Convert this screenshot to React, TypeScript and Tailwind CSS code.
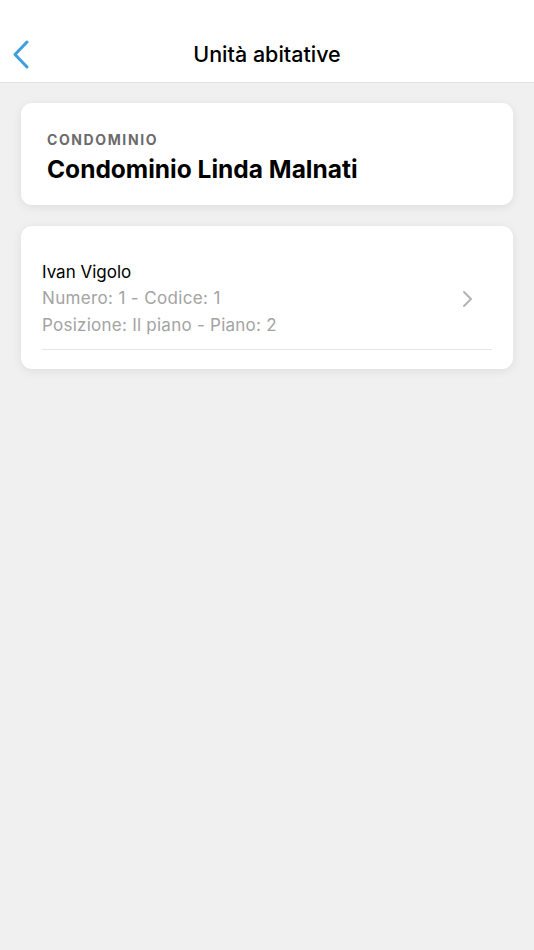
import React from "react";

export default function App() {
  return (
    <div className="min-h-[950px] w-[534px] bg-[#f0f0f0]" style={{ fontFamily: "Inter, 'Noto Sans', sans-serif" }}>
      <div className="h-[83px] bg-white border-b border-[#e2e2e2] pt-[27px]">
        <div className="relative h-[55px] flex items-center justify-center">
          <svg className="absolute left-[11px] top-[13px]" width="20" height="30" viewBox="0 0 20 30" fill="none">
            <path d="M16 2 L4 14.5 L16 27" stroke="#3d9fe0" strokeWidth="3" strokeLinecap="round" strokeLinejoin="round" />
          </svg>
          <div className="text-[21.5px] font-medium text-black tracking-[0px]">Unità abitative</div>
        </div>
      </div>
      <div className="px-[21px] pt-[20px] flex flex-col gap-[21px]">
        <div className="bg-white rounded-[11px] shadow-[0_2px_10px_rgba(0,0,0,0.08)] h-[102px] px-[26px] pt-[27px]">
          <div className="text-[14px] font-bold tracking-[1.6px] text-[#6b6b6b] leading-[20px]">CONDOMINIO</div>
          <div className="text-[24.5px] font-bold text-black leading-[32px] mt-[3px] tracking-[0px]">Condominio Linda Malnati</div>
        </div>
        <div className="bg-white rounded-[11px] shadow-[0_2px_10px_rgba(0,0,0,0.08)] h-[143px] px-[21px] pt-[33px]">
          <div className="flex items-center border-b border-[#e6e6e6] pb-[11px]">
            <div className="flex-1">
              <div className="text-[17px] text-black leading-[26px]">Ivan Vigolo</div>
              <div className="text-[17px] text-[#a3a3a3] leading-[27px] tracking-[0.35px]">Numero: 1 - Codice: 1</div>
              <div className="text-[17px] text-[#a3a3a3] leading-[26px] tracking-[0.25px]">Posizione: Il piano - Piano: 2</div>
            </div>
            <svg className="mr-[19px]" width="12" height="18" viewBox="0 0 12 18" fill="none">
              <path d="M3 2 L10 9 L3 16" stroke="#b3b3b3" strokeWidth="2" strokeLinecap="round" strokeLinejoin="round" />
            </svg>
          </div>
        </div>
      </div>
    </div>
  );
}
